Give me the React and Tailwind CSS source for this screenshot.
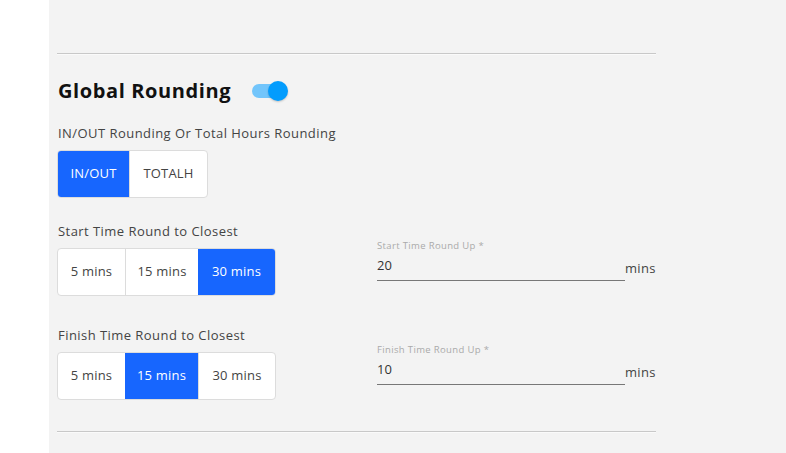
import React from "react";

const font = { fontFamily: '"Open Sans", "Liberation Sans", sans-serif' };

function Group({ items, active, widths }) {
  return (
    <div className="flex h-[48px] w-fit rounded-[4px] border border-[#dcdcdc] bg-white overflow-hidden">
      {items.map((it, i) => (
        <div
          key={it}
          className={
            "flex items-center justify-center text-[13px] tracking-[0.2px] " +
            (i > 0 ? "border-l border-[#dcdcdc] " : "") +
            (i === active ? "bg-[#1766fe] text-white border-l-0" : "text-[#444]")
          }
          style={{ width: widths[i] }}
        >
          {it}
        </div>
      ))}
    </div>
  );
}

function Field({ label, value }) {
  return (
    <div className="flex items-end">
      <div className="w-[248px]">
        <div className="text-[9.5px] text-[#aaa] leading-[12px] tracking-[0.35px]">{label}</div>
        <div className="mt-[3px] h-[26px] border-b border-[#777] text-[13px] text-[#333] leading-[20px]">{value}</div>
      </div>
      <div className="text-[13px] text-[#444] leading-[20px] mb-[3px] tracking-[0.3px]">mins</div>
    </div>
  );
}

export default function App() {
  return (
    <div className="flex w-[786px] h-[453px] bg-white" style={font}>
      <div className="w-[49px] shrink-0 bg-white" />
      <div className="flex-1 bg-[#f3f3f3] pl-[8px] pt-[53px]">
        <div className="w-[599px]">
          <div className="h-[2px] border-t border-[#c8c8c8] bg-[#fafafa]" />
          <div className="flex items-center gap-[21px] mt-[23px] h-[26px]">
            <div className="text-[20px] font-bold text-[#111] leading-[26px] pl-[1px] tracking-[0.6px]">Global Rounding</div>
            <div className="relative w-[36px] h-[20px] flex items-center">
              <div className="absolute left-0 w-[32px] h-[14px] rounded-full bg-[#72c5fb]" />
              <div className="absolute right-0 w-[20px] h-[20px] rounded-full bg-[#039cfd] shadow-[0_1px_2px_rgba(0,0,0,0.2)]" />
            </div>
          </div>
          <div className="mt-[20px] text-[13px] text-[#444] leading-[18px] pl-[1px] tracking-[0.45px]">IN/OUT Rounding Or Total Hours Rounding</div>
          <div className="mt-[8px]">
            <Group items={["IN/OUT", "TOTALH"]} active={0} widths={[71, 78]} />
          </div>

          <div className="flex mt-[24px]">
            <div className="w-[320px]">
              <div className="text-[13px] text-[#444] leading-[18px] pl-[1px] tracking-[0.45px]">Start Time Round to Closest</div>
              <div className="mt-[8px]">
                <Group items={["5 mins", "15 mins", "30 mins"]} active={2} widths={[67, 73, 77]} />
              </div>
            </div>
            <div className="pt-[18px]">
              <Field label="Start Time Round Up *" value="20" />
            </div>
          </div>

          <div className="flex mt-[30px]">
            <div className="w-[320px]">
              <div className="text-[13px] text-[#444] leading-[18px] pl-[1px] tracking-[0.45px]">Finish Time Round to Closest</div>
              <div className="mt-[8px]">
                <Group items={["5 mins", "15 mins", "30 mins"]} active={1} widths={[67, 73, 77]} />
              </div>
            </div>
            <div className="pt-[18px]">
              <Field label="Finish Time Round Up *" value="10" />
            </div>
          </div>

          <div className="mt-[31px] h-[2px] border-t border-[#c8c8c8] bg-[#fafafa]" />
        </div>
      </div>
    </div>
  );
}
